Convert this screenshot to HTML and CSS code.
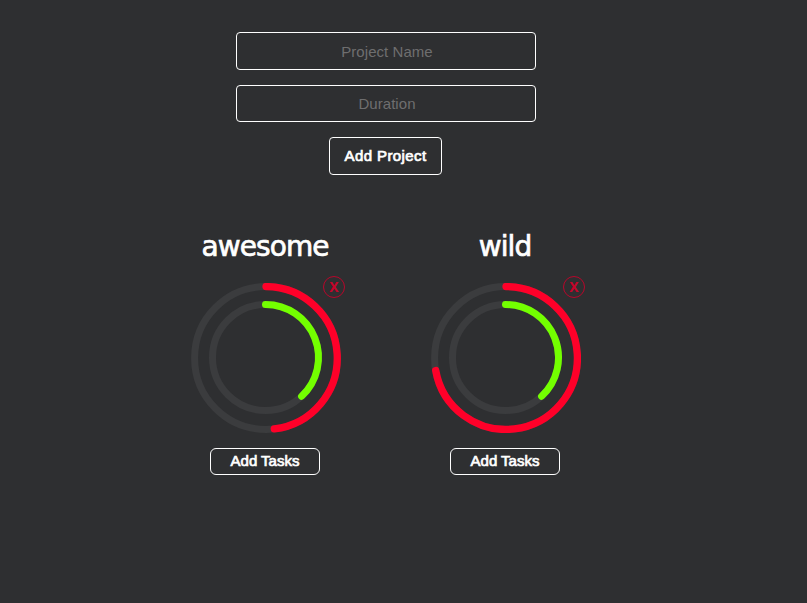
FILE: index.html
```html
<!DOCTYPE html>
<html lang="en">
<head>
<meta charset="utf-8">
<title>Projects</title>
<link rel="stylesheet" href="styles.css">
</head>
<body>
<main class="app">
  <form class="project-form">
    <input class="field" type="text" placeholder="Project Name">
    <input class="field field-duration" type="text" placeholder="Duration">
    <button class="add-project" type="button">Add Project</button>
  </form>
  <section class="projects">
    <article class="project">
      <h2 class="title">awesome</h2>
      <div class="dial">
        <svg class="rings" viewBox="0 0 150 150">
          <circle class="track" cx="75" cy="75" r="71.4"/>
          <circle class="track" cx="74.5" cy="74.5" r="53"/>
          <path class="outer" d="M75 3.6A71.4 71.4 0 0 1 83.3 145.9"/>
          <path class="inner" d="M74.5 21.5A53 53 0 0 1 110.6 113.3"/>
        </svg>
        <button class="remove" type="button">X</button>
      </div>
      <button class="add-tasks" type="button">Add Tasks</button>
    </article>
    <article class="project">
      <h2 class="title">wild</h2>
      <div class="dial">
        <svg class="rings" viewBox="0 0 150 150">
          <circle class="track" cx="75" cy="75" r="71.4"/>
          <circle class="track" cx="74.5" cy="74.5" r="53"/>
          <path class="outer" d="M75 3.6A71.4 71.4 0 1 1 4.7 87.5"/>
          <path class="inner" d="M74.5 21.5A53 53 0 0 1 110.6 113.3"/>
        </svg>
        <button class="remove" type="button">X</button>
      </div>
      <button class="add-tasks" type="button">Add Tasks</button>
    </article>
  </section>
</main>
</body>
</html>
```
FILE: styles.css
```css
* { box-sizing: border-box; }
body {
  margin: 0;
  height: 603px;
  overflow: hidden;
  background: #2e2f31;
  color: #fff;
  font-family: "Liberation Sans", Arial, sans-serif;
}
.app { width: 772px; padding-top: 32px; }
.project-form { display: flex; flex-direction: column; align-items: center; }
.field {
  width: 300px;
  height: 38px;
  margin: 0 0 15px;
  padding: 1px 0 0 2px;
  border: 1px solid #fff;
  border-radius: 4px;
  background: transparent;
  color: #fff;
  font: 15px "Liberation Sans", Arial, sans-serif;
  letter-spacing: 0.05px;
  text-align: center;
}
.field-duration { height: 37px; padding-top: 0; }
.field::placeholder { color: #6e6e6f; opacity: 1; }
button {
  padding: 0;
  border: 1px solid #fff;
  background: transparent;
  color: #fff;
  font: 15px "Liberation Sans", Arial, sans-serif;
  -webkit-text-stroke: 0.7px currentColor;
}
.add-project {
  width: 113px;
  height: 38px;
  margin-right: 1px;
  padding-bottom: 1px;
  border-radius: 4px;
  letter-spacing: 0.4px;
}
.projects {
  display: flex;
  justify-content: center;
  gap: 90px;
  padding-top: 51px;
}
.project { width: 150px; display: flex; flex-direction: column; align-items: center; }
.title {
  margin: 0 2px 16px 0;
  padding-top: 1px;
  height: 41px;
  font: 28px/40px "DejaVu Sans", Verdana, sans-serif;
  letter-spacing: -0.9px;
  -webkit-text-stroke: 0.7px #fff;
}
.dial { position: relative; width: 150px; height: 150px; }
.rings { display: block; width: 150px; height: 150px; fill: none; stroke-width: 7; stroke-linecap: round; }
.track { stroke: #3b3c3e; }
.outer { stroke: #ff0029; stroke-width: 7.3; }
.inner { stroke: #73ff00; }
.remove {
  position: absolute;
  top: -7px;
  left: 132px;
  width: 22px;
  height: 22px;
  border-color: #b8062b;
  border-radius: 50%;
  color: #c5042a;
  font: bold 14px/20px "Noto Sans", Verdana, sans-serif;
  -webkit-text-stroke: 0;
}
.add-tasks {
  width: 110px;
  height: 27px;
  margin: 15px 2px 0 0;
  padding-bottom: 2px;
  border-radius: 6px;
}
```
